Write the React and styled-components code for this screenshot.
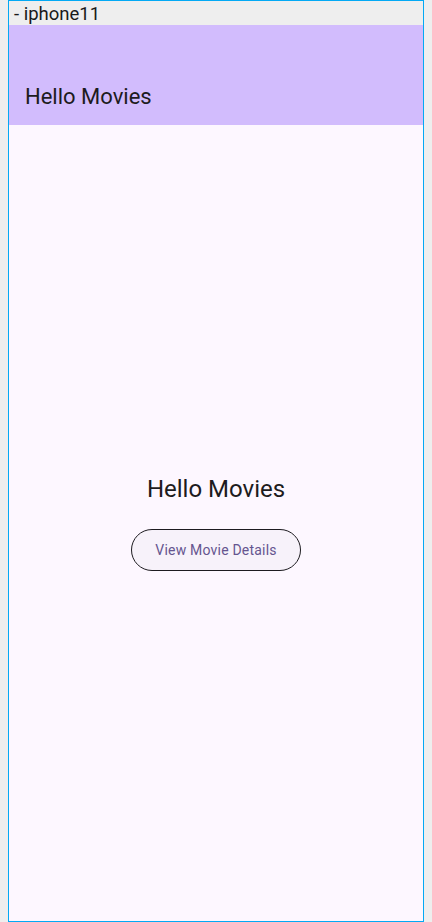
import React from "react";
import styled, { createGlobalStyle } from "styled-components";

const Global = createGlobalStyle`
  html, body { margin: 0; padding: 0; background: #eeeeee; }
  body { font-family: Roboto, "Noto Sans", sans-serif; }
`;

const Frame = styled.div`
  box-sizing: border-box;
  margin-left: 8px;
  width: 416px;
  height: 922px;
  border: 1px solid #03a9f4;
  display: flex;
  flex-direction: column;
  background: #eeeeee;
`;

const DeviceLabel = styled.div`
  height: 24px;
  padding-left: 5px;
  font-size: 18.5px;
  line-height: 26px;
  color: #1a1a1a;
  overflow: hidden;
`;

const AppBar = styled.header`
  height: 100px;
  background: #d2bcfd;
  display: flex;
  align-items: flex-end;
  padding: 0 16px 14px;
  box-sizing: border-box;
`;

const AppTitle = styled.h1`
  margin: 0;
  font-size: 22px;
  font-weight: 400;
  line-height: 28px;
  color: #1d1b20;
`;

const Body = styled.main`
  flex: 1;
  background: #fdf7ff;
  display: flex;
  flex-direction: column;
  align-items: center;
  justify-content: center;
  gap: 24px;
  padding-bottom: 2px;
`;

const Heading = styled.h2`
  margin: 0;
  font-size: 24px;
  font-weight: 400;
  line-height: 32px;
  color: #1d1b20;
`;

const OutlineButton = styled.button`
  box-sizing: border-box;
  height: 42px;
  width: 170px;
  padding: 0;
  border-radius: 21px;
  border: 1px solid #1d1b20;
  background: #f7f2fa;
  color: #65558f;
  font-family: Roboto, sans-serif;
  font-size: 14px;
  font-weight: 400;
  letter-spacing: 0.2px;
  cursor: pointer;
`;

export default function App() {
  return (
    <>
      <Global />
      <Frame>
        <DeviceLabel>- iphone11</DeviceLabel>
        <AppBar>
          <AppTitle>Hello Movies</AppTitle>
        </AppBar>
        <Body>
          <Heading>Hello Movies</Heading>
          <OutlineButton>View Movie Details</OutlineButton>
        </Body>
      </Frame>
    </>
  );
}
